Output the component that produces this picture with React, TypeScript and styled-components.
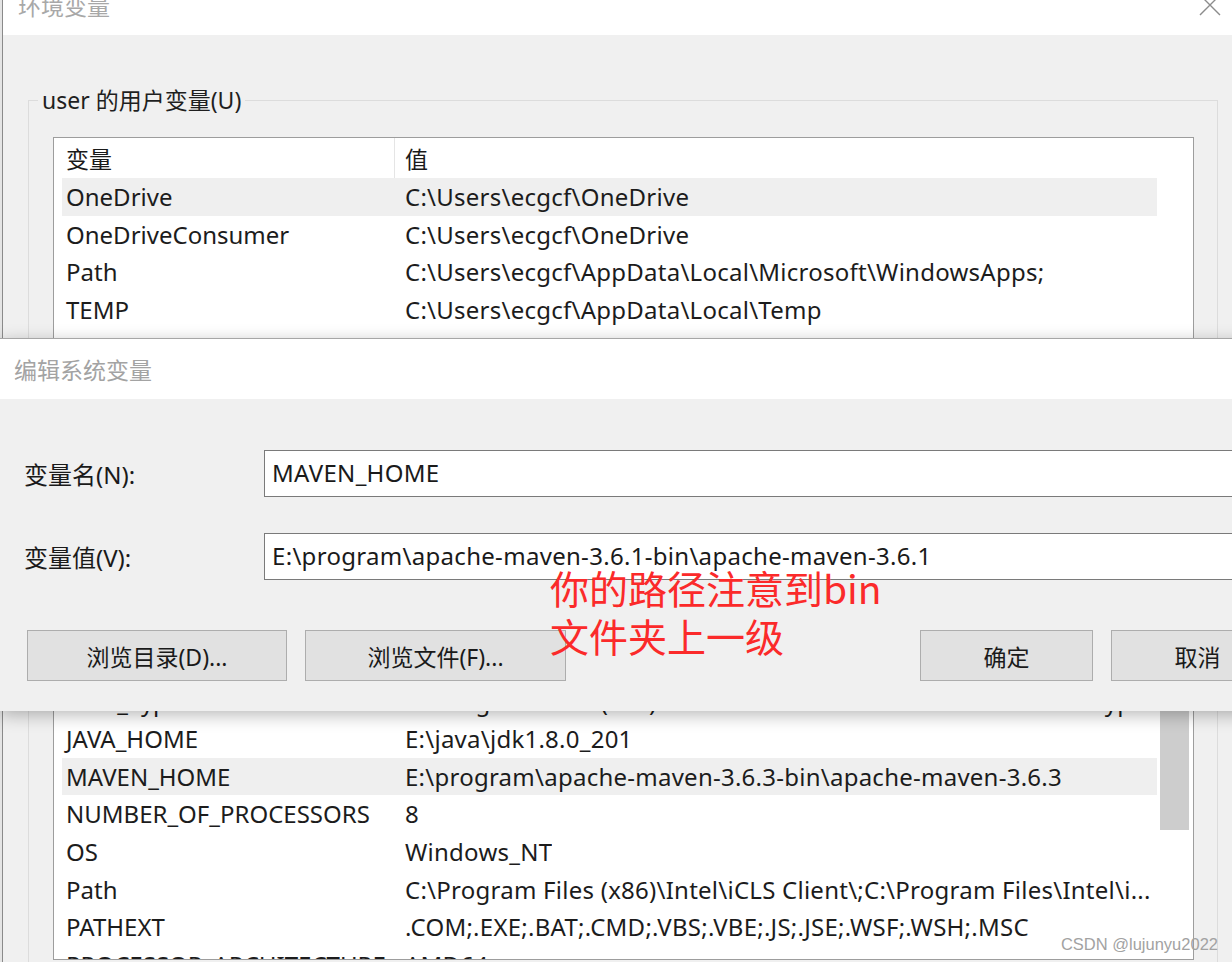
import styled, { createGlobalStyle } from "styled-components";

const GlobalStyle = createGlobalStyle`
  html, body {
    margin: 0;
    padding: 0;
  }
  body {
    background: #f0f0f0;
    font-family: "Noto Sans", "Noto Sans CJK SC", sans-serif;
    color: #1a1a1a;
  }
`;

const ROW_H = 37.6;

const Screen = styled.div`
  position: relative;
  width: 1232px;
  height: 962px;
  overflow: hidden;
  display: flex;
  background: #f0f0f0;
`;

const LeftStrip = styled.div`
  width: 2px;
  flex-shrink: 0;
  background: #e4e4e4;
`;

const EnvWindow = styled.div`
  flex: 1;
  min-width: 0;
  border-left: 1px solid #8a8a8a;
  display: flex;
  flex-direction: column;
`;

const TitleBar = styled.div`
  height: 35px;
  flex-shrink: 0;
  background: #fff;
  display: flex;
  justify-content: space-between;
  align-items: flex-start;
  padding: 0 11px 0 15px;
  overflow: hidden;
`;

const WindowTitle = styled.div`
  font-size: 23px;
  line-height: 24px;
  margin-top: -6px;
  color: #a8a8a8;
`;

const CloseGlyph = styled.svg`
  margin-top: -6px;
  width: 22px;
  height: 22px;
`;

const GroupBox = styled.fieldset<{ $top: number }>`
  margin: ${(p) => p.$top}px 14px 0 25px;
  padding: 0;
  border: 1px solid #dcdcdc;
  min-width: 0;
  flex-shrink: 0;
`;

const GroupLegend = styled.legend`
  margin-left: 9px;
  padding: 0 4px;
  font-size: 23px;
  line-height: 30px;
  color: #1f1f1f;
`;

const GroupBody = styled.div`
  padding: 22px 23px 10px 24px;
`;

const ListBox = styled.div<{ $height: number }>`
  height: ${(p) => p.$height}px;
  box-sizing: border-box;
  border: 1px solid #9d9d9d;
  background: #fff;
  padding-left: 8px;
  display: flex;
  overflow: hidden;
`;

const ListColumn = styled.div`
  width: 1095px;
  flex-shrink: 0;
  display: flex;
  flex-direction: column;
`;

const HeaderRow = styled.div`
  height: 40px;
  flex-shrink: 0;
  display: flex;
  align-items: center;
  font-size: 23px;
  color: #1a1a1a;
`;

const HeaderKey = styled.div`
  width: 333px;
  height: 100%;
  box-sizing: border-box;
  padding-left: 4px;
  border-right: 1px solid #e5e5e5;
  display: flex;
  align-items: center;
`;

const HeaderValue = styled.div`
  padding-left: 10px;
`;

const Row = styled.div<{ $selected?: boolean }>`
  height: ${ROW_H}px;
  flex-shrink: 0;
  display: flex;
  align-items: center;
  font-size: 24px;
  color: #1c1c1c;
  white-space: nowrap;
  background: ${(p) => (p.$selected ? "#efefef" : "transparent")};
`;

const KeyCell = styled.div`
  width: 333px;
  flex-shrink: 0;
  box-sizing: border-box;
  padding-left: 4px;
  overflow: hidden;
`;

const ValueCell = styled.div`
  padding-left: 10px;
  letter-spacing: 0.25px;
  overflow: hidden;
`;

const ScrollTrack = styled.div`
  width: 36px;
  flex-shrink: 0;
  background: #fff;
`;

const ScrollThumb = styled.div<{ $top: number; $height: number }>`
  margin: ${(p) => p.$top}px 0 0 3px;
  width: 29px;
  height: ${(p) => p.$height}px;
  background: #cdcdcd;
`;

const ButtonRow = styled.div<{ $top: number; $gap: number }>`
  margin-top: ${(p) => p.$top}px;
  display: flex;
  gap: ${(p) => p.$gap}px;
`;

const PushButton = styled.button<{ $width: number; $height: number }>`
  width: ${(p) => p.$width}px;
  height: ${(p) => p.$height}px;
  padding: 0;
  background: #e1e1e1;
  border: 1px solid #adadad;
  font-family: "Noto Sans", "Noto Sans CJK SC", sans-serif;
  font-size: 23px;
  color: #1a1a1a;
`;

/* edit dialog lying over the environment window */
const EditDialog = styled.div`
  position: absolute;
  top: 338px;
  left: 0;
  width: 1311px;
  border-top: 1px solid #a6a6a6;
  box-shadow: 0 4px 16px rgba(0, 0, 0, 0.28);
  background: #f0f0f0;
`;

const DialogTitleBar = styled.div`
  height: 60px;
  background: #fff;
  display: flex;
  align-items: center;
  padding-left: 14px;
  font-size: 23px;
  color: #a3a3a3;
`;

const DialogBody = styled.div`
  position: relative;
  padding: 51px 27px 30px 24px;
`;

const FormGrid = styled.div`
  display: grid;
  grid-template-columns: 240px 1fr;
  row-gap: 36px;
  align-items: center;
`;

const FieldLabel = styled.div`
  font-size: 24px;
  color: #1a1a1a;
`;

const TextBox = styled.div`
  height: 47px;
  box-sizing: border-box;
  border: 1px solid #7a7a7a;
  background: #fff;
  padding: 0 0 2px 7px;
  display: flex;
  align-items: center;
  font-size: 24px;
  letter-spacing: 0.3px;
  color: #1a1a1a;
  white-space: nowrap;
`;

const DialogButtons = styled.div`
  margin-top: 50px;
  display: flex;
  justify-content: space-between;
  padding-left: 3px;
`;

const ButtonGroup = styled.div`
  display: flex;
  gap: 18px;
`;

const Annotation = styled.div`
  position: absolute;
  left: 550px;
  top: 164px;
  font-family: "Noto Sans CJK SC", sans-serif;
  font-size: 39px;
  line-height: 48px;
  color: #fb2a2a;
  white-space: nowrap;
`;

const Watermark = styled.div`
  position: absolute;
  right: 14px;
  bottom: 8px;
  font-family: "Liberation Sans", Arial, sans-serif;
  font-size: 16.5px;
  color: #a2a2a2;
`;

type EnvVar = { key: string; value: string };

const userVars: EnvVar[] = [
  { key: "OneDrive", value: "C:\\Users\\ecgcf\\OneDrive" },
  { key: "OneDriveConsumer", value: "C:\\Users\\ecgcf\\OneDrive" },
  { key: "Path", value: "C:\\Users\\ecgcf\\AppData\\Local\\Microsoft\\WindowsApps;" },
  { key: "TEMP", value: "C:\\Users\\ecgcf\\AppData\\Local\\Temp" },
  { key: "TMP", value: "C:\\Users\\ecgcf\\AppData\\Local\\Temp" },
];

const systemVars: EnvVar[] = [
  { key: "CLASSPATH", value: ".;%JAVA_HOME%\\lib\\dt.jar;%JAVA_HOME%\\lib\\tools.jar;" },
  { key: "ComSpec", value: "C:\\WINDOWS\\system32\\cmd.exe" },
  { key: "DriverData", value: "C:\\Windows\\System32\\Drivers\\DriverData" },
  { key: "INTEL_DEV_REDIST", value: "C:\\Program Files (x86)\\Common Files\\Intel\\Shared Libraries\\" },
  { key: "Intel_Types", value: "C:\\Program Files (x86)\\Common Files\\Intel\\Shared Libraries\\typ..." },
  { key: "JAVA_HOME", value: "E:\\java\\jdk1.8.0_201" },
  { key: "MAVEN_HOME", value: "E:\\program\\apache-maven-3.6.3-bin\\apache-maven-3.6.3" },
  { key: "NUMBER_OF_PROCESSORS", value: "8" },
  { key: "OS", value: "Windows_NT" },
  { key: "Path", value: "C:\\Program Files (x86)\\Intel\\iCLS Client\\;C:\\Program Files\\Intel\\i..." },
  { key: "PATHEXT", value: ".COM;.EXE;.BAT;.CMD;.VBS;.VBE;.JS;.JSE;.WSF;.WSH;.MSC" },
  { key: "PROCESSOR_ARCHITECTURE", value: "AMD64" },
];

function VarList({ vars, selected, height, thumb }: {
  vars: EnvVar[];
  selected: string;
  height: number;
  thumb?: { top: number; height: number };
}) {
  return (
    <ListBox $height={height}>
      <ListColumn>
        <HeaderRow>
          <HeaderKey>变量</HeaderKey>
          <HeaderValue>值</HeaderValue>
        </HeaderRow>
        {vars.map((v) => (
          <Row key={v.key + v.value} $selected={v.key === selected}>
            <KeyCell>{v.key}</KeyCell>
            <ValueCell>{v.value}</ValueCell>
          </Row>
        ))}
      </ListColumn>
      <ScrollTrack>
        {thumb && <ScrollThumb $top={thumb.top} $height={thumb.height} />}
      </ScrollTrack>
    </ListBox>
  );
}

export default function App() {
  return (
    <>
      <GlobalStyle />
      <Screen>
        <LeftStrip />
        <EnvWindow>
          <TitleBar>
            <WindowTitle>环境变量</WindowTitle>
            <CloseGlyph viewBox="0 0 22 22">
              <path d="M1 1 L21 21 M21 1 L1 21" stroke="#8c8c8c" strokeWidth="1.4" fill="none" />
            </CloseGlyph>
          </TitleBar>

          <GroupBox $top={50}>
            <GroupLegend>user 的用户变量(U)</GroupLegend>
            <GroupBody>
              <VarList vars={userVars} selected="OneDrive" height={230} />
              <ButtonRow $top={12} $gap={16}>
                <PushButton $width={170} $height={44}>新建(N)...</PushButton>
                <PushButton $width={170} $height={44}>编辑(E)...</PushButton>
                <PushButton $width={170} $height={44}>删除(D)</PushButton>
              </ButtonRow>
            </GroupBody>
          </GroupBox>

          <GroupBox $top={5}>
            <GroupLegend>系统变量(S)</GroupLegend>
            <GroupBody>
              <VarList
                vars={systemVars}
                selected="MAVEN_HOME"
                height={469}
                thumb={{ top: 208, height: 130 }}
              />
            </GroupBody>
          </GroupBox>
        </EnvWindow>

        <EditDialog>
          <DialogTitleBar>编辑系统变量</DialogTitleBar>
          <DialogBody>
            <FormGrid>
              <FieldLabel>变量名(N):</FieldLabel>
              <TextBox>MAVEN_HOME</TextBox>
              <FieldLabel>变量值(V):</FieldLabel>
              <TextBox>E:\program\apache-maven-3.6.1-bin\apache-maven-3.6.1</TextBox>
            </FormGrid>
            <DialogButtons>
              <ButtonGroup>
                <PushButton $width={260} $height={51}>浏览目录(D)...</PushButton>
                <PushButton $width={261} $height={51}>浏览文件(F)...</PushButton>
              </ButtonGroup>
              <ButtonGroup>
                <PushButton $width={173} $height={51}>确定</PushButton>
                <PushButton $width={173} $height={51}>取消</PushButton>
              </ButtonGroup>
            </DialogButtons>
            <Annotation>
              你的路径注意到bin
              <br />
              文件夹上一级
            </Annotation>
          </DialogBody>
        </EditDialog>

        <Watermark>CSDN @lujunyu2022</Watermark>
      </Screen>
    </>
  );
}
